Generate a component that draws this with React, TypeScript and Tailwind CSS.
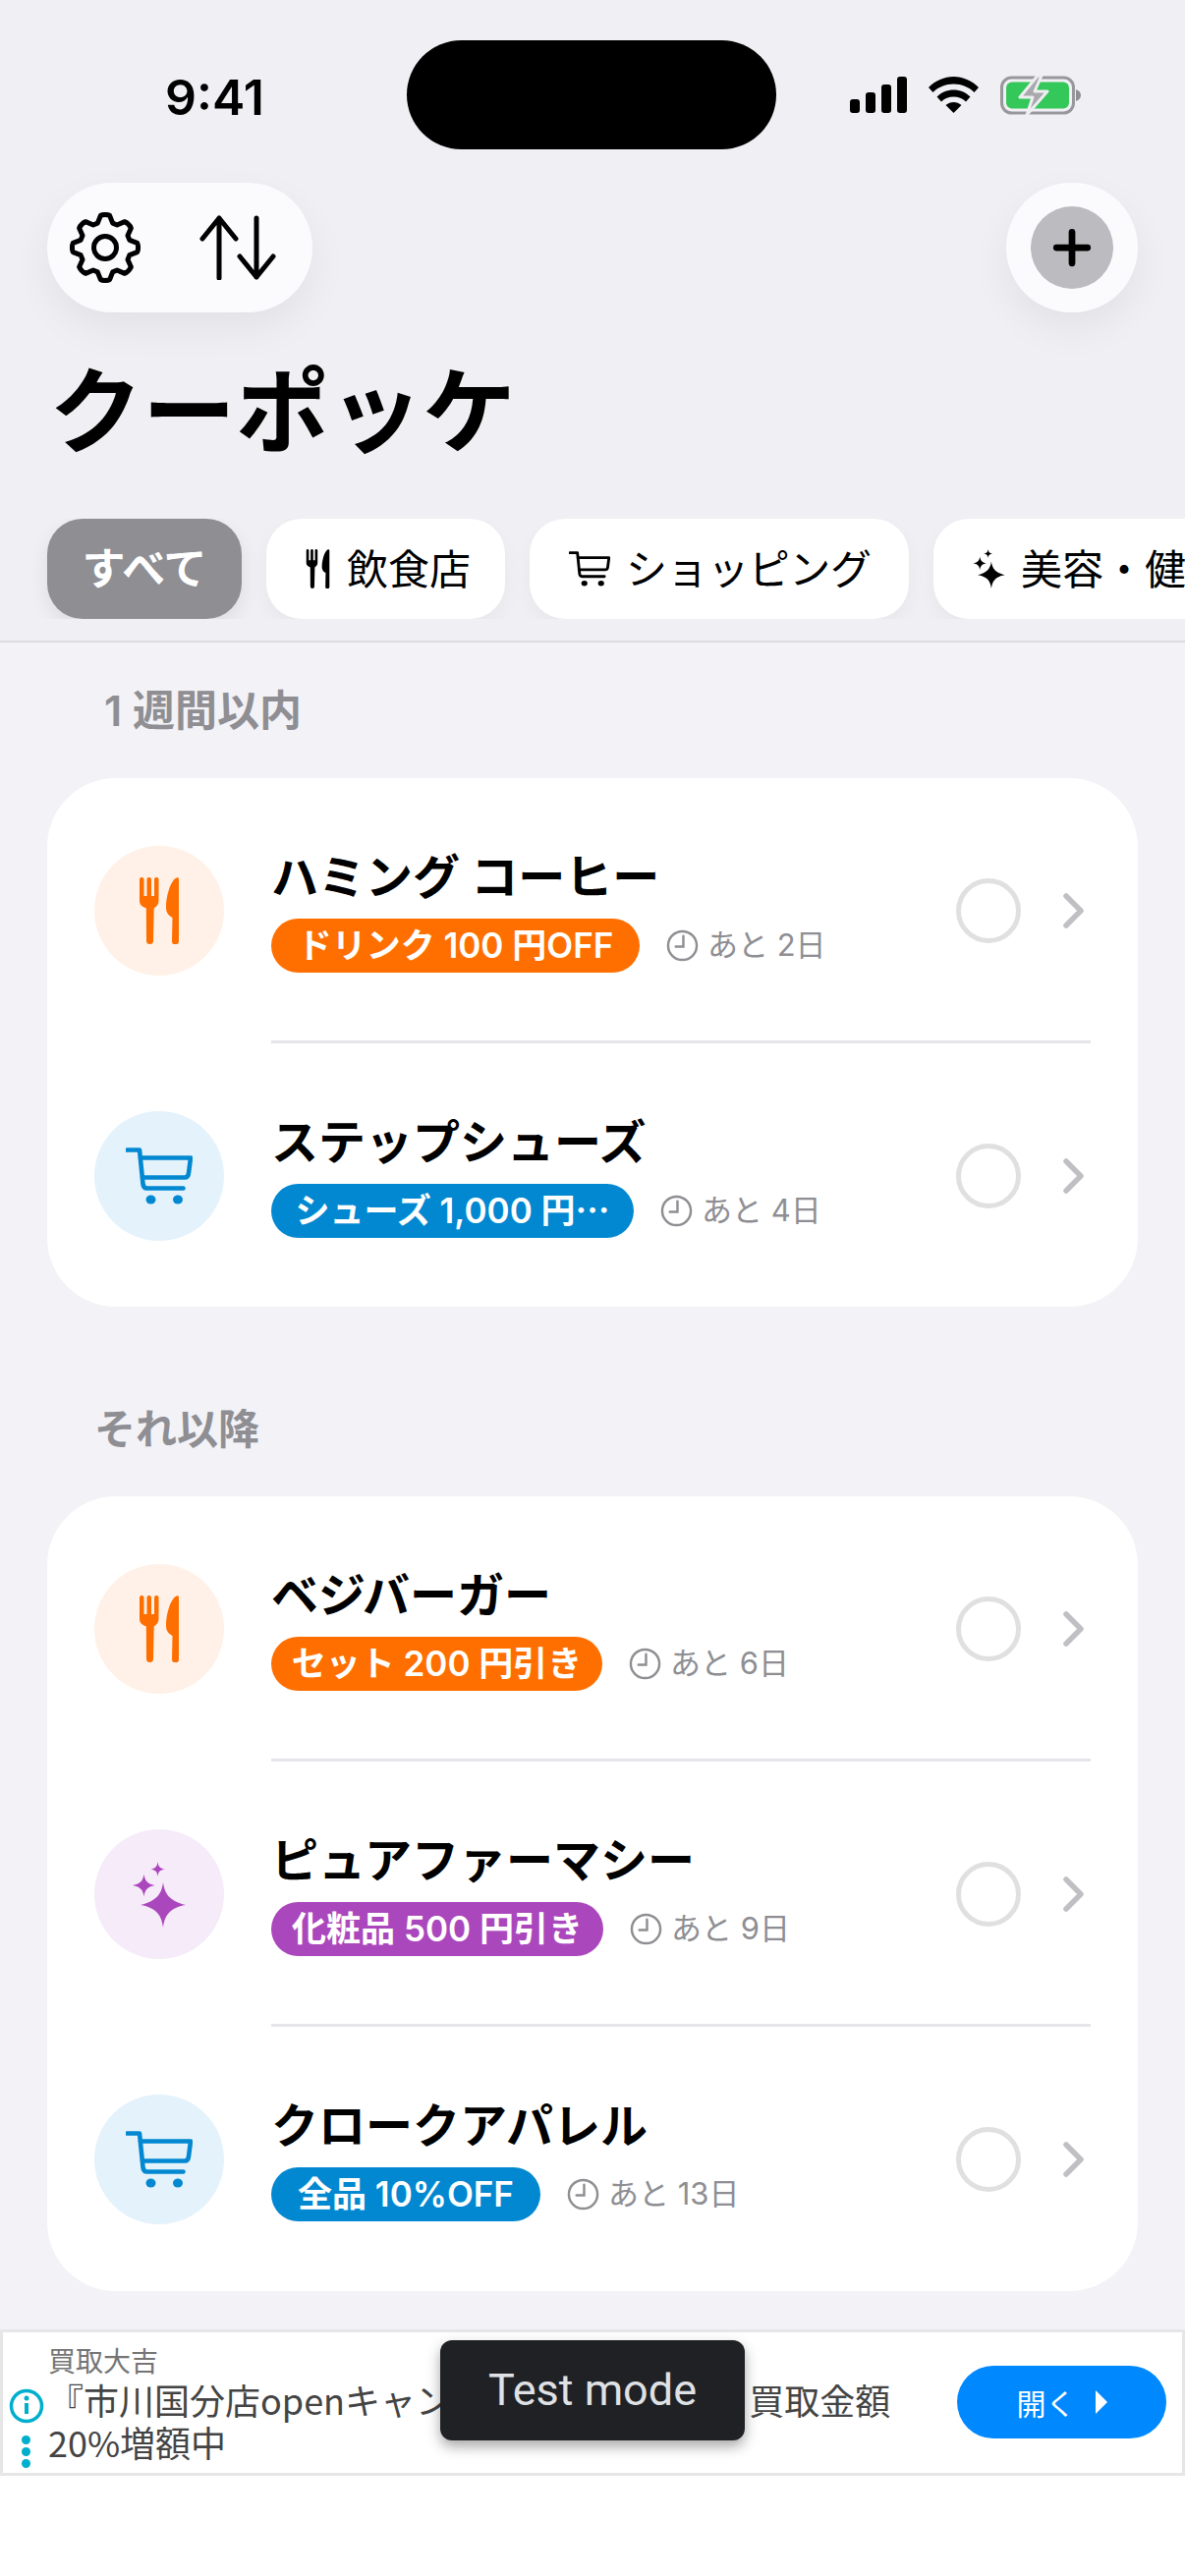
import { Plus } from 'lucide-react';

const FONT = "font-['Inter','Noto_Sans_CJK_JP',sans-serif]";

type Kind = 'food' | 'shop' | 'beauty';

// 8 toothed cog outline, centre 36,36
const gearPath = (() => {
  const pts: string[] = [];
  for (let i = 0; i < 8; i++) {
    const a = (i * Math.PI) / 4 - Math.PI / 2;
    const at = (r: number, d: number) => {
      const x = 36 + r * Math.cos(a + d);
      const y = 36 + r * Math.sin(a + d);
      return `${x.toFixed(2)} ${y.toFixed(2)}`;
    };
    pts.push(`L${at(26, -0.3)}`, `L${at(33, -0.14)}`, `Q${at(34.500, 0)} ${at(33, 0.14)}`, `L${at(26, 0.3)}`);
  }
  return `M${pts.join(' ').slice(1)}Z`;
})();

const ForkKnife = ({ className }: { className?: string }) => (
  <svg viewBox="0 0 40 68" className={className} fill="currentColor">
    <path d="M0 2.200a2.200 2.200 0 0 1 4.500 0V19h3V2.200a2.200 2.200 0 0 1 4.500 0V19h3V2.200a2.200 2.200 0 0 1 4.500 0V24c0 3.500-2 5.500-4.800 7.500L14 64.500a3.500 3.500 0 0 1-7 0L6.800 31.500C2 29.500 0 27.500 0 24z" />
    <path d="M40 2v63a3.500 3.500 0 0 1-7 0L33.500 41C30 39 27 36.500 27 31 27 20 31 4 37.500.5 39 -.2 40 .5 40 2z" />
  </svg>
);

const Cart = ({ className }: { className?: string }) => (
  <svg viewBox="0 0 68 58" className={className} fill="none" stroke="currentColor" strokeWidth="4.600" strokeLinecap="round" strokeLinejoin="round">
    <path d="M1.500 2.500h12.500L17.500 37c.3 3 1.500 4.500 4 4.500h37" />
    <path d="M15 10.500h51L64 26c-.3 3-1.500 4.500-4 4.500H17" />
    <ellipse cx="25.500" cy="53" rx="5" ry="4.500" fill="currentColor" stroke="none" />
    <ellipse cx="53" cy="53" rx="5" ry="4.500" fill="currentColor" stroke="none" />
  </svg>
);

const Sparkles = ({ className }: { className?: string }) => (
  <svg viewBox="0 0 54 67" className={className} fill="currentColor">
    <path d="M31 21c1.500 11 6 19 23 23-17 3-21.500 11-23 23-1.500-12-6-20-23-23 17-4 21.500-12 23-23z" />
    <path d="M11.500 12.500c.8 6 3 10 11 11.500-8 1.500-10.200 5.500-11 11.500-.8-6-3-10-11.500-11.500 8.500-1.500 10.700-5.500 11.500-11.500z" />
    <path d="M25.500 0c.5 4.500 2 7 7.500 7.500-5.500.8-7 3-7.500 7.500-.5-4.500-2-6.700-7.500-7.500C23.500 7 25 4.500 25.500 0z" />
  </svg>
);

const Clock = () => (
  <svg viewBox="0 0 34 34" className="w-[33px] h-[33px] shrink-0" fill="none" stroke="#8e8e93" strokeWidth="2.500">
    <circle cx="17" cy="17" r="15" />
    <path d="M18 7v11h-8" strokeLinecap="round" />
  </svg>
);

const iconStyles: Record<Kind, { bg: string; text: string; badge: string }> = {
  food: { bg: 'bg-[#fff1e7]', text: 'text-[#ff6f00]', badge: 'bg-[#ff6f00]' },
  shop: { bg: 'bg-[#e4f2fb]', text: 'text-[#0288d1]', badge: 'bg-[#0288d1]' },
  beauty: { bg: 'bg-[#f6ebf8]', text: 'text-[#ab47bc]', badge: 'bg-[#ab47bc]' },
};

const Row = ({ kind, name, badge, badgeWidth, left, last }: { kind: Kind; name: string; badge: string; badgeWidth: string; left: string; last?: boolean }) => {
  const s = iconStyles[kind];
  return (
    <div className="h-[270px] flex items-center pl-[48px] pr-[53px] relative">
      <div className={`w-[132px] h-[132px] rounded-full flex items-center justify-center shrink-0 ${s.bg} ${s.text}`}>
        {kind === 'food' && <ForkKnife className="w-[40px] h-[68px]" />}
        {kind === 'shop' && <Cart className="w-[68px] h-[58px]" />}
        {kind === 'beauty' && <Sparkles className="w-[54px] h-[67px]" />}
      </div>
      <div className="ml-[48px] flex-1 min-w-0">
        <div className="text-[48px] leading-[56px] font-bold text-black whitespace-nowrap">{name}</div>
        <div className="flex items-center mt-[14px]">
          <div className={`h-[55px] rounded-full flex items-center justify-center text-white text-[35px] font-semibold whitespace-nowrap ${s.badge} ${badgeWidth}`}>{badge}</div>
          <div className="ml-[27px]"><Clock /></div>
          <div className="ml-[9px] text-[31px] text-[#8e8e93] whitespace-nowrap">{left}</div>
        </div>
      </div>
      <div className="w-[66px] h-[66px] rounded-full border-[5px] border-[#e0e0e0] shrink-0" />
      <svg viewBox="0 0 24 36" className="w-[24px] h-[36px] ml-[42px] shrink-0" fill="none" stroke="#c0c0c4" strokeWidth="5.500" strokeLinecap="round" strokeLinejoin="round">
        <path d="M4 3l15 15L4 33" />
      </svg>
      {!last && <div className="absolute left-[228px] right-[48px] bottom-0 h-[3px] bg-[#e5e5ea]" />}
    </div>
  );
};

export default function App() {
  return (
    <div className={`w-[1206px] h-[2622px] bg-white overflow-hidden ${FONT}`}>
      <div className="h-[2371px] bg-[#f2f2f7] flex flex-col">
        <div className="bg-[#f0f0f4]">
          {/* Status bar */}
          <div className="flex items-center pt-[41px] h-[152px]">
            <div className="w-[414px] pl-[168px] pt-[5px] text-[50px] font-semibold text-black">9:41</div>
            <div className="w-[376px] h-[111px] bg-black rounded-[56px]" />
            <div className="flex items-center pl-[75px]">
              <svg viewBox="0 0 58 37" className="w-[58px] h-[37px]" fill="black">
                <rect x="0" y="23" width="10" height="14" rx="3" />
                <rect x="16" y="16" width="10" height="21" rx="3" />
                <rect x="32" y="8" width="10" height="29" rx="3" />
                <rect x="48" y="0" width="10" height="37" rx="3" />
              </svg>
              <svg viewBox="0 0 51 37" className="w-[51px] h-[37px] ml-[22px]" fill="black">
                <path d="M25.500 0C35 0 44 4 51 11l-4.500 5C41 10.500 33.500 7.500 25.500 7.500S10 10.500 4.500 16L0 11C7 4 16 0 25.500 0z" />
                <path d="M25.500 13.500c6.500 0 12.500 2.500 17 7L38 25.500c-3.200-3.200-7.800-5-12.500-5s-9.300 1.800-12.500 5l-4.500-5c4.500-4.500 10.500-7 17-7z" />
                <path d="M25.500 26c3 0 5.500 1 8 3L25.500 37l-8-8c2.500-2 5-3 8-3z" />
              </svg>
              <svg viewBox="0 0 82 40" className="w-[82px] h-[40px] ml-[22px]">
                <rect x="1.500" y="2" width="73" height="36" rx="10" fill="none" stroke="#98989c" strokeWidth="3" />
                <rect x="6" y="6.500" width="64" height="27" rx="6" fill="#34c759" />
                <path d="M77 14c3 1 5 3 5 6s-2 5-5 6z" fill="#8e8e93" />
                <path d="M38 0L20 22h13l-6 18 21-24H35l7-16z" fill="#a9a9ad" stroke="#eeeef2" strokeWidth="3" strokeLinejoin="round" />
              </svg>
            </div>
          </div>

          {/* Toolbar */}
          <div className="flex justify-between px-[48px] mt-[34px]">
            <div className="w-[270px] h-[132px] rounded-[66px] bg-[#fbfbfe] shadow-[0_16px_40px_rgba(0,0,0,0.06)] flex items-center pl-[23px]">
              <svg viewBox="0 0 72 72" className="w-[72px] h-[72px]" fill="none" stroke="black" strokeWidth="5" strokeLinejoin="round">
                <path d={gearPath} />
                <circle cx="36" cy="36" r="11.500" />
              </svg>
              <svg viewBox="0 0 78 66" className="w-[78px] h-[66px] ml-[60px]" fill="none" stroke="black" strokeWidth="5" strokeLinecap="round" strokeLinejoin="round">
                <path d="M20 64V3M3 24L20 3l17 21" />
                <path d="M58 3v60M41 42l17 21 17-21" />
              </svg>
            </div>
            <div className="w-[134px] h-[132px] rounded-full bg-[#fbfbfe] shadow-[0_16px_40px_rgba(0,0,0,0.06)] flex items-center justify-center">
              <div className="w-[84px] h-[84px] rounded-full bg-[#bcbcc0] flex items-center justify-center">
                <Plus className="w-[54px] h-[54px] text-black" strokeWidth={3} />
              </div>
            </div>
          </div>

          {/* Title */}
          <div className="h-[210px] pl-[50px] pt-[46px] text-[95px] leading-[112px] font-bold text-black">クーポッケ</div>

          {/* Filter chips */}
          <div className="flex gap-[25px] pl-[48px] overflow-hidden">
            <div className="h-[102px] w-[198px] shrink-0 rounded-[36px] bg-[#8e8e93] shadow-[0_8px_20px_rgba(0,0,0,0.08)] flex items-center justify-center text-white text-[44px] font-bold">すべて</div>
            <div className="h-[102px] w-[243px] shrink-0 rounded-[36px] bg-white shadow-[0_8px_20px_rgba(0,0,0,0.04)] flex items-center pl-[40px] text-black text-[42px] font-normal">
              <ForkKnife className="w-[25px] h-[40px]" />
              <span className="ml-[17px]">飲食店</span>
            </div>
            <div className="h-[102px] w-[386px] shrink-0 rounded-[36px] bg-white shadow-[0_8px_20px_rgba(0,0,0,0.04)] flex items-center pl-[40px] text-black text-[42px] font-normal">
              <Cart className="w-[42px] h-[36px]" />
              <span className="ml-[16px] tracking-[-0.01em]">ショッピング</span>
            </div>
            <div className="h-[102px] w-[400px] shrink-0 rounded-[36px] bg-white shadow-[0_8px_20px_rgba(0,0,0,0.04)] flex items-center pl-[40px] text-black text-[42px] font-normal">
              <Sparkles className="w-[33px] h-[40px]" />
              <span className="ml-[16px] whitespace-nowrap">美容・健康</span>
            </div>
          </div>
          <div className="h-[22px]" />
        </div>
        <div className="h-[2px] bg-[#dcdce0]" />

        {/* Within a week */}
        <div className="pl-[106px] mt-[44px] text-[43px] leading-[50px] font-semibold text-[#8e8e93] whitespace-nowrap">1 週間以内</div>
        <div className="mx-[48px] mt-[44px] bg-white rounded-[70px] h-[538px] overflow-hidden">
          <Row kind="food" name="ハミング コーヒー" badge="ドリンク 100 円OFF" badgeWidth="w-[375px]" left="あと 2日" />
          <Row kind="shop" name="ステップシューズ" badge="シューズ 1,000 円⋯" badgeWidth="w-[369px]" left="あと 4日" last />
        </div>

        {/* Later */}
        <div className="pl-[96px] mt-[100px] text-[42px] leading-[50px] font-semibold text-[#8e8e93]">それ以降</div>
        <div className="mx-[48px] mt-[43px] bg-white rounded-[70px] h-[809px] overflow-hidden">
          <Row kind="food" name="ベジバーガー" badge="セット 200 円引き" badgeWidth="w-[337px]" left="あと 6日" />
          <Row kind="beauty" name="ピュアファーマシー" badge="化粧品 500 円引き" badgeWidth="w-[338px]" left="あと 9日" />
          <Row kind="shop" name="クロークアパレル" badge="全品 10%OFF" badgeWidth="w-[274px]" left="あと 13日" last />
        </div>
      </div>

      {/* Ad banner */}
      <div className="relative h-[149px] border-[3px] border-[#e6e6e6] bg-white font-['Noto_Sans_CJK_JP','Noto_Sans',sans-serif] flex">
        <div className="w-[46px] shrink-0 flex flex-col items-center pt-[57px]">
          <svg viewBox="0 0 36 36" className="w-[36px] h-[36px] ml-[1px]" fill="none" stroke="#00aecd" strokeWidth="3.500">
            <circle cx="18" cy="18" r="15.500" />
            <path d="M18 15v11" strokeWidth="4" />
            <circle cx="18" cy="10" r="2.500" fill="#00aecd" stroke="none" />
          </svg>
          <div className="flex flex-col gap-[3px] mt-[12px]">
            <div className="w-[9px] h-[9px] rounded-full bg-[#00aecd]" />
            <div className="w-[9px] h-[9px] rounded-full bg-[#00aecd]" />
            <div className="w-[9px] h-[9px] rounded-full bg-[#00aecd]" />
          </div>
        </div>
        <div className="w-[880px] shrink-0 pt-[10px]">
          <div className="text-[28px] leading-[36px] text-[#757575]">買取大吉</div>
          <div className="text-[36px] leading-[43px] text-[#444] mt-[1px]">『市川国分店openキャンペーン開催中！』<span className="inline-block w-[17px]" />買取金額 20%増額中</div>
        </div>
        <div className="ml-[45px] mt-[34px] w-[213px] h-[74px] rounded-full bg-[#0088ff] flex items-center justify-center text-white text-[30px]">
          開く
          <svg viewBox="0 0 12 24" className="w-[12px] h-[24px] ml-[20px]" fill="white"><path d="M0 0l12 12L0 24z" /></svg>
        </div>
        <div className="absolute left-[445px] top-[8px] w-[310px] h-[102px] rounded-[12px] bg-[#202124] shadow-[0_6px_14px_rgba(0,0,0,0.35)] flex items-center justify-center text-[45px] text-[#dfe1e5] font-['Roboto',sans-serif]">Test mode</div>
      </div>
    </div>
  );
}
